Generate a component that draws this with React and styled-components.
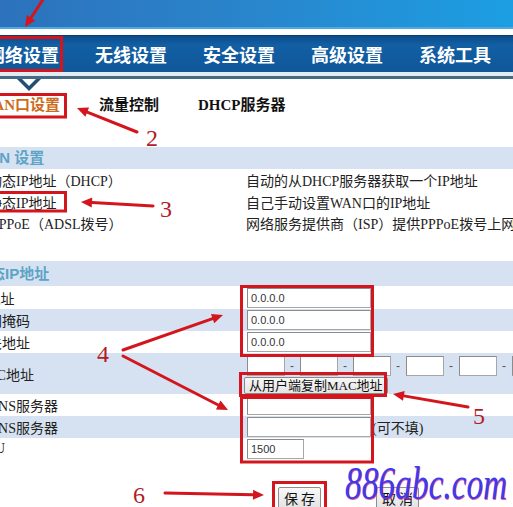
import React from 'react'
import styled, { createGlobalStyle } from 'styled-components'

const RED = '#d3161d'

const GlobalStyle = createGlobalStyle`
  html, body {
    margin: 0;
    padding: 0;
    background: #fff;
    overflow: hidden;
  }
`

const Screen = styled.div`
  position: relative;
  width: 513px;
  height: 507px;
  overflow: hidden;
  font-family: 'Liberation Serif', 'Noto Sans CJK SC', serif;
  color: #222;
`

// the shot is cropped: the page really starts 26px left of the window
const Page = styled.div`
  margin-left: -26px;
  width: 580px;
`

const Banner = styled.div`
  height: 29px;
  background: linear-gradient(90deg, #2c70ba 0%, #2a84cb 45%, #1aa2e6 100%);
  box-shadow: inset 0 -2px 0 #4fa9de;
  border-bottom: 6px solid #fff;
`

const Nav = styled.nav`
  height: 36px;
  display: flex;
  gap: 36px;
  padding-left: 13px;
  background: linear-gradient(#0b4c8a, #125fa4 25%, #0f5798);
  border-top: 1px solid #0a3e6e;
`

const NavItem = styled.span`
  font-family: 'Noto Sans CJK SC', sans-serif;
  font-size: 18px;
  font-weight: 700;
  line-height: 36px;
  color: #fff;
  white-space: nowrap;
`

const NavRule = styled.div`
  height: 3px;
  border-top: 4px solid #e3eaf0;
  background: #476a84;
`

const SubTabs = styled.div`
  position: relative;
  display: flex;
  gap: 39px;
  padding: 13px 0 0 6px;
  height: 26px;
  margin-bottom: 29px;
`

const Pointer = styled.svg`
  position: absolute;
  top: 0;
  left: 43px;
`

const Tab = styled.span`
  font-size: 15px;
  font-weight: 700;
  line-height: 26px;
  white-space: nowrap;
  color: ${(p) => (p.$active ? '#cc6c1c' : '#111')};
`

const SectionHead = styled.div`
  height: ${(p) => p.$h}px;
  line-height: ${(p) => p.$h}px;
  padding-left: 1px;
  margin-top: ${(p) => p.$top || 0}px;
  background: #d6e2f1;
  font-family: 'Liberation Sans', 'Noto Sans CJK SC', sans-serif;
  font-size: 15px;
  font-weight: 700;
  color: #5da4c6;
`

const Row = styled.div`
  display: grid;
  grid-template-columns: 272px 1fr;
  height: ${(p) => p.$h || 22}px;
  background: ${(p) => (p.$alt ? '#d6e2f1' : '#fff')};
  font-size: 14px;
  white-space: nowrap;
`

const Label = styled.div`
  display: flex;
  align-items: center;
  padding-left: ${(p) => p.$indent || 0}px;
`

const Field = styled.div`
  display: flex;
  align-items: center;
  gap: 2px;
`

const MacField = styled.div`
  display: flex;
  flex-direction: column;
  align-items: flex-start;
  padding-top: 3px;
  gap: 1px;
`

const MacInputs = styled.div`
  display: flex;
  align-items: center;
`

const Sep = styled.span`
  width: 14px;
  text-align: center;
  font-family: 'Liberation Sans', sans-serif;
  font-size: 12px;
  color: #555;
`

const TextBox = styled.input`
  box-sizing: border-box;
  width: ${(p) => p.$w}px;
  height: 20px;
  margin: 0 0 0 1px;
  padding: 0 3px;
  border: 1px solid #a7a7a7;
  border-top-color: #8c8c8c;
  border-left-color: #8c8c8c;
  background: #fff;
  font-family: 'Liberation Sans', sans-serif;
  font-size: 11px;
  color: #333;
  outline: none;
`

const CopyButton = styled.button`
  height: 17px;
  margin-left: -2px;
  padding: 0 4px;
  border: 1px solid #8a8a8a;
  border-radius: 2px;
  background: linear-gradient(#f7f7f7, #e4e4e4);
  font-family: 'Liberation Serif', 'Noto Sans CJK SC', serif;
  font-size: 13px;
  line-height: 15px;
  color: #111;
`

const Note = styled.span`
  font-size: 14px;
  margin-left: -1px;
`

const Actions = styled.div`
  display: flex;
  gap: 55px;
  margin-top: 27px;
  padding-left: 304px;
`

const Button = styled.button`
  width: 43px;
  height: 22px;
  padding: 0;
  border: 1px solid #8d8d8d;
  border-radius: 2px;
  background: linear-gradient(#f8f8f8, #e3e3e3);
  font-family: 'Noto Sans CJK SC', sans-serif;
  font-size: 14px;
  line-height: 20px;
  color: #111;
`

const Overlay = styled.svg`
  position: absolute;
  inset: 0;
  pointer-events: none;
`

const Mark = styled.text`
  font-family: 'Liberation Serif', serif;
  font-size: 24px;
  fill: #b21c27;
`

const Watermark = styled.span`
  position: absolute;
  left: 345px;
  top: 460px;
  font-family: 'Liberation Serif', serif;
  font-style: italic;
  font-size: 47px;
  line-height: 47px;
  color: #3b3cf0;
  text-shadow: 1px 1px 0 rgba(235, 40, 110, 0.75);
  transform: scaleX(0.71);
  transform-origin: left top;
  white-space: nowrap;
`

const Arrow = ({ from, to }) => {
  const [x1, y1] = from
  const [x2, y2] = to
  const len = Math.hypot(x2 - x1, y2 - y1)
  const ux = (x2 - x1) / len
  const uy = (y2 - y1) / len
  const bx = x2 - ux * 11
  const by = y2 - uy * 11
  const px = -uy * 5
  const py = ux * 5
  return (
    <g>
      <line x1={x1} y1={y1} x2={bx} y2={by} stroke={RED} strokeWidth='3' strokeLinecap='round' />
      <polygon points={`${x2},${y2} ${bx + px},${by + py} ${bx - px},${by - py}`} fill={RED} />
    </g>
  )
}

const Box = ({ x, y, w, h }) => (
  <rect x={x} y={y} width={w} height={h} fill='none' stroke={RED} strokeWidth='3' />
)

const App = () => {
  const mac = [0, 1, 2, 3, 4, 5]
  return (
    <>
      <GlobalStyle />
      <Screen>
        <Page>
          <Banner />
          <Nav>
            <NavItem>网络设置</NavItem>
            <NavItem>无线设置</NavItem>
            <NavItem>安全设置</NavItem>
            <NavItem>高级设置</NavItem>
            <NavItem>系统工具</NavItem>
          </Nav>
          <NavRule />
          <SubTabs>
            <Pointer width='24' height='13' viewBox='0 0 24 13'>
              <polygon points='0,0 24,0 12,12' fill='#1f4e76' />
              <polygon points='5,0 19,0 12,7' fill='#fff' />
            </Pointer>
            <Tab $active>WAN口设置</Tab>
            <Tab>流量控制</Tab>
            <Tab>DHCP服务器</Tab>
          </SubTabs>

          <SectionHead $h={22}>WAN 设置</SectionHead>
          <Row>
            <Label $indent={14}>动态IP地址（DHCP）</Label>
            <Label>自动的从DHCP服务器获取一个IP地址</Label>
          </Row>
          <Row $h={21}>
            <Label $indent={14}>静态IP地址</Label>
            <Label>自己手动设置WAN口的IP地址</Label>
          </Row>
          <Row>
            <Label $indent={17}>PPPoE（ADSL拨号）</Label>
            <Label>网络服务提供商（ISP）提供PPPoE拨号上网</Label>
          </Row>

          <SectionHead $h={25} $top={27}>静态IP地址</SectionHead>
          <Row $h={23}>
            <Label>IP地址</Label>
            <Field><TextBox $w={124} defaultValue='0.0.0.0' /></Field>
          </Row>
          <Row $alt>
            <Label>子网掩码</Label>
            <Field><TextBox $w={124} defaultValue='0.0.0.0' /></Field>
          </Row>
          <Row>
            <Label>网关地址</Label>
            <Field><TextBox $w={124} defaultValue='0.0.0.0' /></Field>
          </Row>
          <Row $alt $h={41}>
            <Label>MAC地址</Label>
            <MacField>
              <MacInputs>
                {mac.map((i) => (
                  <React.Fragment key={i}>
                    {i > 0 && <Sep>-</Sep>}
                    <TextBox $w={38} defaultValue='' />
                  </React.Fragment>
                ))}
              </MacInputs>
              <CopyButton>从用户端复制MAC地址</CopyButton>
            </MacField>
          </Row>
          <Row>
            <Label>主DNS服务器</Label>
            <Field><TextBox $w={124} defaultValue='' /></Field>
          </Row>
          <Row $alt>
            <Label>备DNS服务器</Label>
            <Field>
              <TextBox $w={124} defaultValue='' />
              <Note>(可不填)</Note>
            </Field>
          </Row>
          <Row>
            <Label>MTU</Label>
            <Field><TextBox $w={57} defaultValue='1500' /></Field>
          </Row>

          <Actions>
            <Button>保 存</Button>
            <Button>取 消</Button>
          </Actions>
        </Page>

        <Watermark>886abc.com</Watermark>

        <Overlay width='513' height='507' viewBox='0 0 513 507'>
          <Box x={-5} y={37.5} w={66.5} h={33} />
          <Box x={-5} y={94.5} w={70.5} h={22.5} />
          <Box x={-5} y={192.5} w={70.5} h={18.5} />
          <Box x={241.5} y={286.5} w={131} h={69} />
          <Box x={240.5} y={373.5} w={145} h={22} />
          <Box x={241.5} y={397.5} w={131} h={64.5} />
          <Box x={273.5} y={482.5} w={52} h={30} />

          <Arrow from={[44, -2]} to={[25, 27]} />
          <Arrow from={[137, 132]} to={[77, 108]} />
          <Arrow from={[153, 206]} to={[81, 202]} />
          <Arrow from={[123, 350]} to={[223, 315]} />
          <Arrow from={[123, 356]} to={[228, 410]} />
          <Arrow from={[468, 407]} to={[393, 394]} />
          <Arrow from={[165, 493]} to={[264, 495]} />

          <Mark x='146' y='146'>2</Mark>
          <Mark x='160' y='217'>3</Mark>
          <Mark x='97' y='362'>4</Mark>
          <Mark x='473' y='424'>5</Mark>
          <Mark x='133' y='503'>6</Mark>
        </Overlay>
      </Screen>
    </>
  )
}

export default App
